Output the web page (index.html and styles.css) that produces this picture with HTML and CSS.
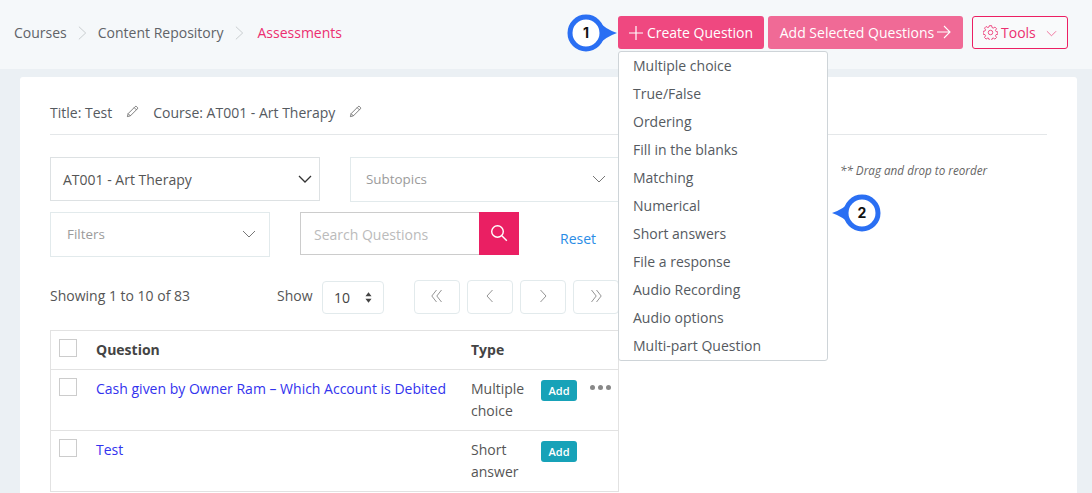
FILE: index.html
```html
<!DOCTYPE html>
<html lang="en">
<head>
<meta charset="utf-8">
<title>Assessments</title>
<link rel="stylesheet" href="styles.css">
</head>
<body>
<header class="topbar">
  <nav class="crumbs">
    <span>Courses</span>
    <svg class="crumb-sep" viewBox="0 0 10 16"><path d="M1 1l7.500 7L1 15"/></svg>
    <span>Content Repository</span>
    <svg class="crumb-sep" viewBox="0 0 10 16"><path d="M1 1l7.500 7L1 15"/></svg>
    <span class="crumb-active">Assessments</span>
  </nav>
  <div class="actions">
    <button class="btn btn-create"><svg class="ico-plus" viewBox="0 0 14 14"><path d="M7 0v14M0 7h14"/></svg><span>Create Question</span></button>
    <button class="btn btn-add"><span>Add Selected Questions</span><svg class="ico-arrow" viewBox="0 0 14 14"><path d="M0 7h13M7 1l6 6-6 6"/></svg></button>
    <button class="btn btn-tools">
      <svg class="ico-gear" viewBox="0 0 16 16"><path d="M6.800 .7h2.400l.4 2 1.300.6 1.800-1.100 1.700 1.700-1.100 1.800.6 1.300 2 .4v2.400l-2 .4-.6 1.300 1.100 1.800-1.700 1.700-1.800-1.100-1.300.6-.4 2H6.800l-.4-2-1.300-.6-1.800 1.100-1.700-1.700 1.100-1.800-.6-1.300-2-.4V6.800l2-.4.6-1.300-1.100-1.800 1.700-1.700 1.800 1.100 1.300-.6z"/><circle cx="8" cy="8" r="2.400"/></svg>
      <span>Tools</span>
      <svg class="ico-chev-small" viewBox="0 0 12 7"><path d="M1 1l5 5 5-5"/></svg>
    </button>
  </div>
</header>

<main class="card">
  <div class="title-row">
    <span>Title: Test</span>
    <svg class="ico-pencil" viewBox="0 0 14 14"><path d="M1.500 12.500l.8-3.200L9.800 1.800a1.200 1.200 0 0 1 1.700 0l.7.7a1.200 1.200 0 0 1 0 1.700L4.700 11.700zM2.300 9.300l2.400 2.400M8.800 2.800l2.400 2.400"/></svg>
    <span>Course: AT001 - Art Therapy</span>
    <svg class="ico-pencil" viewBox="0 0 14 14"><path d="M1.500 12.500l.8-3.200L9.800 1.800a1.200 1.200 0 0 1 1.700 0l.7.7a1.200 1.200 0 0 1 0 1.700L4.700 11.700zM2.300 9.300l2.400 2.400M8.800 2.800l2.400 2.400"/></svg>
  </div>

  <div class="columns">
    <section class="left">
      <div class="filter-row first">
        <div class="select select-course">
          <span>AT001 - Art Therapy</span>
          <svg class="chev dark" viewBox="0 0 14 8"><path d="M1 1l6 6 6-6"/></svg>
        </div>
        <div class="select select-sub">
          <span>Subtopics</span>
          <svg class="chev" viewBox="0 0 14 8"><path d="M1 1l6 6 6-6"/></svg>
        </div>
      </div>
      <div class="filter-row second">
        <div class="select select-filter">
          <span>Filters</span>
          <svg class="chev" viewBox="0 0 14 8"><path d="M1 1l6 6 6-6"/></svg>
        </div>
        <div class="search">
          <div class="search-input">Search Questions</div>
          <div class="search-btn"><svg viewBox="0 0 18 18"><circle cx="7.500" cy="7.500" r="5.800"/><path d="M11.800 11.800l5 5"/></svg></div>
        </div>
        <a class="reset">Reset</a>
      </div>

      <div class="pager-row">
        <span class="showing">Showing 1 to 10 of 83</span>
        <span class="show-label">Show</span>
        <div class="show-select">10
          <svg class="updown" viewBox="0 0 8 12"><path d="M4 0l3.500 4.500h-7zM4 12L.5 7.500h7z"/></svg>
        </div>
        <div class="pager">
          <div class="page-btn"><svg viewBox="0 0 12 12"><path d="M5.500 0L.8 6l4.700 6M10.500 0L5.800 6l4.700 6"/></svg></div>
          <div class="page-btn"><svg viewBox="0 0 12 12"><path d="M8.500 0L3 6l5.500 6"/></svg></div>
          <div class="page-btn"><svg viewBox="0 0 12 12"><path d="M3.500 0L9 6l-5.500 6"/></svg></div>
          <div class="page-btn"><svg viewBox="0 0 12 12"><path d="M1.500 0l4.700 6-4.700 6M6.500 0l4.700 6-4.700 6"/></svg></div>
        </div>
      </div>

      <div class="table">
        <div class="tr th">
          <div class="box"></div>
          <div class="td-q">Question</div>
          <div class="td-t">Type</div>
        </div>
        <div class="tr">
          <div class="box"></div>
          <a class="td-q link">Cash given by Owner Ram – Which Account is Debited</a>
          <div class="td-t">Multiple choice</div>
          <div class="add">Add</div>
          <div class="dots"><i></i><i></i><i></i></div>
        </div>
        <div class="tr">
          <div class="box"></div>
          <a class="td-q link">Test</a>
          <div class="td-t">Short answer</div>
          <div class="add">Add</div>
        </div>
      </div>
    </section>
    <aside class="right"><em>** Drag and drop to reorder</em></aside>
  </div>
</main>

<ul class="menu">
  <li>Multiple choice</li>
  <li>True/False</li>
  <li>Ordering</li>
  <li>Fill in the blanks</li>
  <li>Matching</li>
  <li>Numerical</li>
  <li>Short answers</li>
  <li>File a response</li>
  <li>Audio Recording</li>
  <li>Audio options</li>
  <li>Multi-part Question</li>
</ul>

<div class="callout callout-one">
  <svg viewBox="0 0 50 38"><path class="tip" d="M30 6Q38 15 50 19Q38 23 30 32z"/><circle class="ring" cx="19" cy="19" r="16"/></svg>
  <span>1</span>
</div>
<div class="callout callout-two">
  <svg viewBox="0 0 50 38"><path class="tip" d="M20 6Q12 15 0 19Q12 23 20 32z"/><circle class="ring" cx="30" cy="19" r="16"/></svg>
  <span>2</span>
</div>
</body>
</html>
```

FILE: styles.css
```css
* { box-sizing: border-box; }
html, body { height: 100%; overflow: hidden; }
body {
  margin: 0;
  background: #ebf0f4;
  color: #555;
  font: 14px/22px "Open Sans", "Noto Sans", sans-serif;
}
svg { fill: none; stroke: currentColor; display: block; flex: none; }

.topbar {
  height: 69px;
  background: #f5f8fa;
  display: flex;
  align-items: center;
  justify-content: space-between;
  padding: 0 24px 5px 14px;
}
.crumbs { display: flex; align-items: center; gap: 11px; color: #606368; margin-top: 2px; }
.crumb-sep { width: 9px; height: 16px; color: #c4c8cb; }
.crumb-active { color: #ec2f70; margin-left: 3px; }
.actions { display: flex; align-items: center; }
.btn {
  height: 33px;
  border: 0;
  border-radius: 3px;
  color: #fff;
  font: inherit;
  font-size: 14px;
  display: flex;
  align-items: center;
  justify-content: center;
  padding: 0;
}
.btn span { padding-top: 2px; }
.btn-create { width: 146px; background: #ef4880; gap: 4px; margin-right: 4px; }
.btn-add { width: 195px; background: #f06a96; gap: 3px; margin-right: 9px; }
.btn-tools {
  width: 96px;
  background: #f9fafb;
  color: #ec2f70;
  border: 1px solid #ec1f63;
  gap: 3px;
  justify-content: flex-start;
  padding-left: 10px;
}
.ico-plus { width: 14px; height: 14px; stroke-width: 1.200; margin-top: 1px; }
.ico-arrow { width: 14px; height: 14px; stroke-width: 1.100; }
.ico-gear { width: 15px; height: 15px; stroke-width: .9; }
.ico-chev-small { width: 11px; height: 7px; margin-left: 7px; margin-top: 3px; stroke-width: .9; color: #ee5b8c; }

.card {
  margin: 8px 15px 0 20px;
  height: 440px;
  background: #fff;
  border-radius: 3px;
  padding: 25px 30px 0 30px;
}
.title-row {
  height: 33px;
  border-bottom: 1px solid #e4e7e9;
  display: flex;
  align-items: flex-start;
  gap: 14px;
  color: #555a5f;
}
.ico-pencil { width: 13px; height: 13px; margin-top: 3px; stroke-width: .8; color: #555; }

.columns { display: flex; }
.left { width: 569px; flex: none; padding-top: 22px; }
.right {
  margin-left: 221px;
  padding-top: 24px;
  font-size: 11.700px;
  color: #666;
}

.filter-row { display: flex; align-items: flex-start; }
.first { gap: 30px; height: 55px; }
.second { gap: 30px; height: 68px; }
.select {
  border: 1px solid #e2eaec;
  display: flex;
  align-items: center;
  justify-content: space-between;
  color: #9b9b9b;
  font-size: 13.400px;
}
.select-course {
  width: 270px; height: 44px; padding: 2px 7px 0 12px;
  border-color: #dde1e3; color: #555; font-size: 14px;
}
.select-course .chev { margin-top: -3px; }
.select-sub { width: 269px; height: 45px; padding: 0 12px 2px 15px; }
.select-filter { width: 220px; height: 45px; padding: 0 13px 2px 16px; }
.chev { width: 14px; height: 8px; stroke-width: 1; color: #777; }
.chev.dark { color: #333; stroke-width: 1.300; }
.search { display: flex; height: 43px; margin-right: 12px; }
.search-input {
  width: 179px;
  border: 1px solid #ccc;
  border-right: 0;
  padding: 2px 13px 0;
  display: flex;
  align-items: center;
  color: #bbb;
  font-size: 14px;
}
.search-btn {
  width: 40px;
  background: #ea1f63;
  color: #fff;
  display: flex;
  align-items: center;
  justify-content: center;
}
.search-btn svg { width: 18px; height: 18px; stroke-width: 1.400; margin-bottom: 2px; }
.reset { color: #2a8ce6; font-size: 14px; margin-top: 16px; margin-left: -1px; }

.pager-row { display: flex; align-items: flex-start; height: 50px; }
.showing { width: 227px; padding-top: 5px; }
.show-label { width: 45px; padding-top: 5px; }
.show-select {
  width: 62px;
  height: 33px;
  margin-top: 1px;
  border: 1px solid #e2eaec;
  border-radius: 4px;
  padding-left: 11px;
  display: flex;
  align-items: center;
  justify-content: space-between;
  color: #444;
}
.updown { width: 7px; height: 11px; margin-right: 11px; fill: #444; stroke: none; }
.pager { display: flex; gap: 7px; margin-left: 30px; }
.page-btn {
  width: 46px;
  height: 34px;
  border: 1px solid #e2eaec;
  border-radius: 4px;
  display: flex;
  align-items: center;
  justify-content: center;
  color: #888;
}
.page-btn svg { width: 12px; height: 12px; stroke-width: .9; margin-bottom: 2px; }

.table { border: 1px solid #e2e2e2; border-bottom: 0; }
.tr {
  display: flex;
  align-items: flex-start;
  padding: 8px;
  height: 61px;
  border-bottom: 1px solid #e2e2e2;
}
.th { height: 39px; font-weight: 700; color: #444; }
.box { width: 18px; height: 18px; border: 1px solid #ccc; flex: none; }
.td-q { width: 375px; margin-left: 19px; flex: none; line-height: 22px; }
.link { color: #3333ee; }
.td-t { width: 70px; flex: none; line-height: 22px; }
.add {
  width: 36px;
  height: 21px;
  margin-top: 2px;
  background: #17a2b8;
  color: #fff;
  border-radius: 3px;
  font-size: 11px;
  font-weight: 600;
  line-height: 22px;
  text-align: center;
  flex: none;
}
.dots { display: flex; gap: 3px; margin: 7px 0 0 13px; }
.dots i { width: 5px; height: 5px; border-radius: 50%; background: #888; }

.menu {
  position: absolute;
  left: 618px;
  top: 51px;
  width: 210px;
  height: 310px;
  margin: 0;
  padding: 0;
  list-style: none;
  background: #fff;
  border: 1px solid #ced4d8;
  border-radius: 3px;
  color: #555a5f;
}
.menu li { height: 28px; line-height: 27px; padding-left: 14px; }

.callout { position: absolute; width: 50px; height: 38px; }
.callout svg { width: 50px; height: 38px; }
.callout span {
  position: absolute;
  top: 0;
  height: 38px;
  width: 38px;
  text-align: center;
  font: 700 14px/38px Inter, sans-serif;
  color: #111;
}
.callout-one { left: 567px; top: 14px; }
.callout-two { left: 832px; top: 194px; }
.callout-two span { left: 11px; }
.tip { fill: #2a6ff3; stroke: none; }
.ring { fill: #fff; stroke: #2a6ff3; stroke-width: 5; }
```
